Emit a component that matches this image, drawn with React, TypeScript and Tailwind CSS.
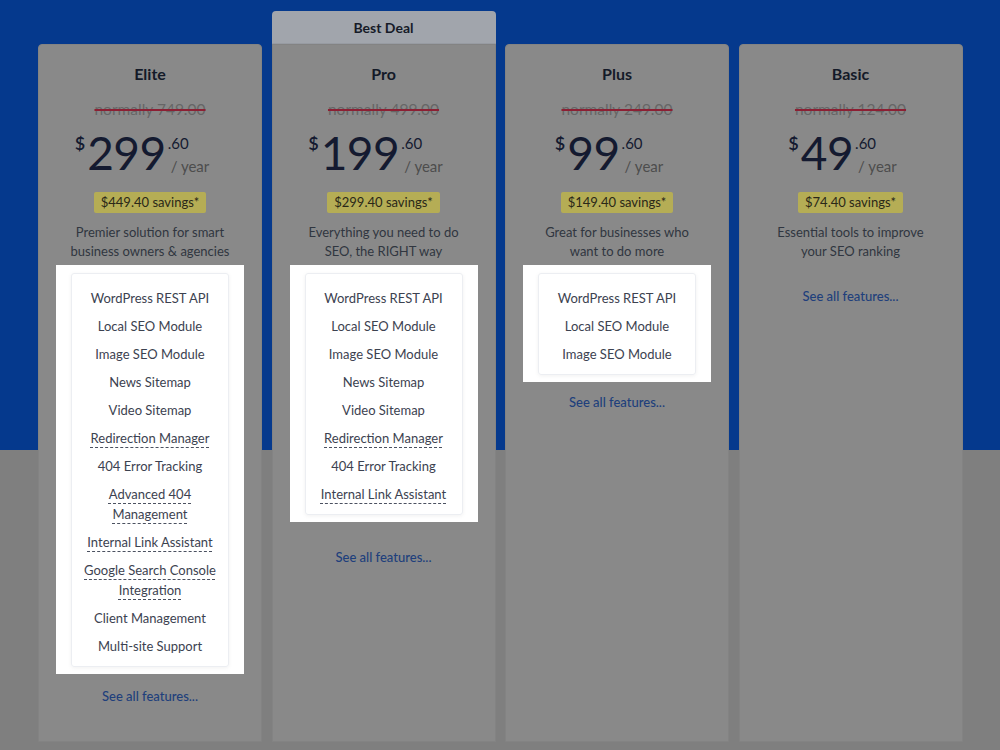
import React from 'react';

type Feature = { lines: string[]; dashed?: boolean };

type Plan = {
  name: string;
  was: string;
  dollars: string;
  savings: string;
  desc: string[];
  features: Feature[];
  best?: boolean;
  linkGap: string;
};

const f = (text: string, dashed = false): Feature => ({ lines: text.split('|'), dashed });

const eliteFeatures: Feature[] = [
  f('WordPress REST API'),
  f('Local SEO Module'),
  f('Image SEO Module'),
  f('News Sitemap'),
  f('Video Sitemap'),
  f('Redirection Manager', true),
  f('404 Error Tracking'),
  f('Advanced 404|Management', true),
  f('Internal Link Assistant', true),
  f('Google Search Console|Integration', true),
  f('Client Management'),
  f('Multi-site Support'),
];

const plans: Plan[] = [
  {
    name: 'Elite',
    was: 'normally 749.00',
    dollars: '299',
    savings: '$449.40 savings*',
    desc: ['Premier solution for smart', 'business owners & agencies'],
    features: eliteFeatures,
    linkGap: 'mt-[12px]',
  },
  {
    name: 'Pro',
    was: 'normally 499.00',
    dollars: '199',
    savings: '$299.40 savings*',
    desc: ['Everything you need to do', 'SEO, the RIGHT way'],
    features: [
      f('WordPress REST API'),
      f('Local SEO Module'),
      f('Image SEO Module'),
      f('News Sitemap'),
      f('Video Sitemap'),
      f('Redirection Manager', true),
      f('404 Error Tracking'),
      f('Internal Link Assistant', true),
    ],
    best: true,
    linkGap: 'mt-[25px]',
  },
  {
    name: 'Plus',
    was: 'normally 249.00',
    dollars: '99',
    savings: '$149.40 savings*',
    desc: ['Great for businesses who', 'want to do more'],
    features: [f('WordPress REST API'), f('Local SEO Module'), f('Image SEO Module')],
    linkGap: 'mt-[10px]',
  },
  {
    name: 'Basic',
    was: 'normally 124.00',
    dollars: '49',
    savings: '$74.40 savings*',
    desc: ['Essential tools to improve', 'your SEO ranking'],
    features: [],
    linkGap: 'mt-[25px]',
  },
];

function FeatureList({ features }: { features: Feature[] }) {
  return (
    <div className="mt-[4px] bg-white px-[15px] pt-[8px] pb-[7px]">
      <div className="w-[158px] rounded-[3px] border border-[#eceef2] pt-[10px] pb-[6px] shadow-[0_1px_4px_rgba(0,0,0,0.06)]">
        {features.map((ft) => (
          <div key={ft.lines.join(' ')} className="py-1 text-center text-[13px] leading-[20px] text-[#3c4250]">
            {ft.lines.map((line, i) => (
              <div key={i}>
                <span
                  className={
                    ft.dashed
                      ? 'underline decoration-dashed decoration-[#4b5160] decoration-1 underline-offset-[4px]'
                      : ''
                  }
                >
                  {line}
                </span>
              </div>
            ))}
          </div>
        ))}
      </div>
    </div>
  );
}

function PlanCard({ plan }: { plan: Plan }) {
  return (
    <div className={plan.best ? 'flex w-[224px] flex-col' : 'mt-[33px] flex w-[224px] flex-col'}>
      {plan.best && (
        <div className="flex h-[33px] items-center justify-center rounded-t-[4px] border-b border-[#979ba2] bg-[#a1a5ac] text-[14px] font-bold text-[#161b28]">
          Best Deal
        </div>
      )}
      <div
        className={
          plan.best
            ? 'flex flex-1 flex-col items-center border border-[#838383] bg-[#898989]'
            : 'flex flex-1 flex-col items-center rounded-t-[4px] border border-[#838383] bg-[#898989]'
        }
      >
        <div className="pt-[19px] text-[16px] font-bold leading-[20px] text-[#141a28]">{plan.name}</div>
        <div className="mt-[15px] text-[15.5px] leading-[20px] text-[#666] line-through decoration-[#8c1f33] decoration-[1.5px]">
          {plan.was}
        </div>
        <div className="mt-[12px] mr-[16px] flex h-[44px] items-start text-[#141a30]">
          <span className="mt-[3px] text-[18px] leading-none font-semibold">$</span>
          <span className="ml-[2px] text-[46px] leading-[44px] tracking-[-0.5px]">{plan.dollars}</span>
          <div className="ml-[2px] flex flex-col">
            <span className="mt-[5px] text-[15px] leading-[15px]">.60</span>
            <span className="mt-[8px] ml-[3px] text-[15px] leading-[15px] text-[#4d4d4d]">/ year</span>
          </div>
        </div>
        <div className="mt-[17px] h-[21px] rounded-[2px] bg-[#b5ad55] px-[7px] text-[13px] leading-[21px] text-[#2a2818]">
          {plan.savings}
        </div>
        <div className="mt-[10px] text-center text-[13px] leading-[19px] text-[#303640]">
          {plan.desc.map((l) => (
            <div key={l}>{l}</div>
          ))}
        </div>
        {plan.features.length > 0 && <FeatureList features={plan.features} />}
        <div className={`${plan.linkGap} text-[13px] leading-[20px] font-medium text-[#203f7c]`}>
          See all features...
        </div>
      </div>
    </div>
  );
}

export default function App() {
  return (
    <div className="h-[750px] w-[1000px] overflow-hidden bg-[linear-gradient(to_bottom,#05398d_450px,#7f7f7f_450px)] font-['Lato','Open_Sans',sans-serif]">
      <div className="flex h-full gap-[9.5px] pt-[11px] pb-[8px] pl-[38px]">
        {plans.map((p) => (
          <PlanCard key={p.name} plan={p} />
        ))}
      </div>
    </div>
  );
}
